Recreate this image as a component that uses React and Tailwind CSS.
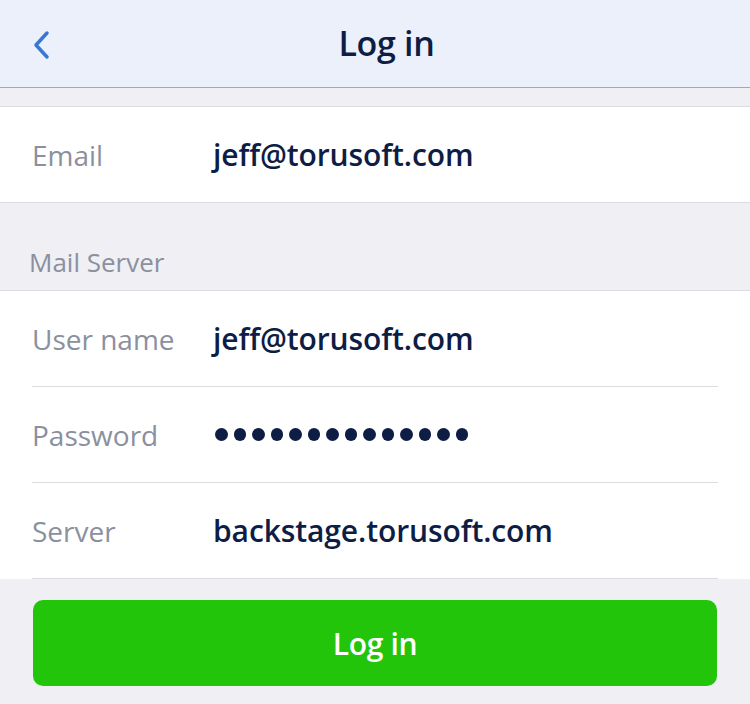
import React from 'react';

const font = { fontFamily: '"Open Sans", "Liberation Sans", sans-serif' };

const Row = ({ label, children }) => (
  <div className="bg-white">
    <div className="mx-[32px] h-[96px] flex items-center border-b border-[#dcdce0]">
      <div className="w-[181px] text-[28px] text-[#8a909e]">{label}</div>
      <div className="text-[30px] font-semibold text-[#0e1d44] tracking-[-0.1px]">{children}</div>
    </div>
  </div>
);

const Dots = ({ count }) => (
  <div className="flex items-center gap-[6px] pl-[2px]">
    {Array.from({ length: count }).map((_, i) => (
      <span key={i} className="block w-[12.5px] h-[12.5px] rounded-full bg-[#0e1d44]" />
    ))}
  </div>
);

export default function App() {
  return (
    <div className="w-[750px] h-[704px] bg-[#efeff4] overflow-hidden" style={font}>
      {/* Header */}
      <div className="relative h-[88px] bg-[#ebf0fb] border-b border-[#a4a8b4] flex items-center justify-center">
        <button className="absolute left-[28px] top-[26px] p-1">
          <svg width="22" height="32" viewBox="0 0 22 32" fill="none">
            <polyline
              points="15,3 4,15 15,27"
              stroke="#3a77d2"
              strokeWidth="3.5"
              strokeLinecap="round"
              strokeLinejoin="round"
            />
          </svg>
        </button>
        <h1 className="pl-[23px] text-[34px] font-semibold text-[#0e1d44] tracking-[-0.3px]">Log in</h1>
      </div>

      {/* Email */}
      <div className="h-[18px]" />
      <div className="bg-white border-y border-[#dcdce0]">
        <div className="mx-[32px] h-[95px] flex items-center">
          <div className="w-[181px] text-[28px] text-[#8a909e]">Email</div>
          <div className="text-[30px] font-semibold text-[#0e1d44] tracking-[-0.1px]">jeff@torusoft.com</div>
        </div>
      </div>

      {/* Mail Server */}
      <div className="h-[87px] flex items-end pb-[8px] px-[29px] text-[26px] text-[#8a909e]">
        Mail Server
      </div>
      <div className="border-t border-[#dcdce0]">
        <Row label="User name">jeff@torusoft.com</Row>
        <Row label="Password">
          <Dots count={14} />
        </Row>
        <Row label="Server">backstage.torusoft.com</Row>
      </div>

      {/* Button */}
      <div className="px-[33px] pt-[21px]">
        <button className="w-full h-[86px] rounded-[10px] bg-[#22c50a] text-white text-[30px] font-semibold tracking-[-0.3px]">
          Log in
        </button>
      </div>
    </div>
  );
}
